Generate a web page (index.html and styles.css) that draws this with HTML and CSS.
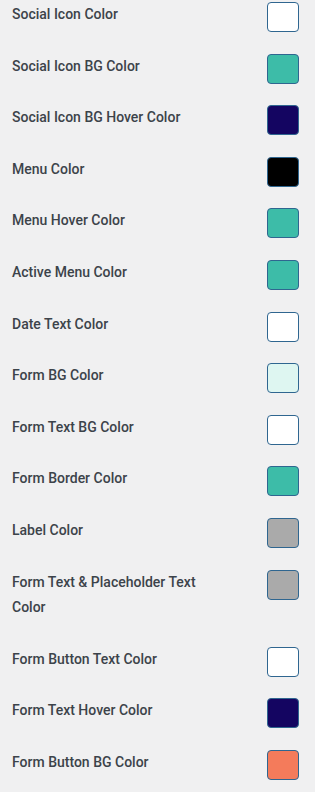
FILE: index.html
```html
<!DOCTYPE html>
<html lang="en">
<head>
    <meta charset="UTF-8">
    <title>Colors</title>
    <link rel="stylesheet" href="styles.css">
</head>
<body>
<ul class="colors">
    <li><span class="label">Social Icon Color</span><span class="swatch white"></span></li>
    <li><span class="label">Social Icon BG Color</span><span class="swatch teal"></span></li>
    <li><span class="label">Social Icon BG Hover Color</span><span class="swatch navy"></span></li>
    <li><span class="label">Menu Color</span><span class="swatch black"></span></li>
    <li><span class="label">Menu Hover Color</span><span class="swatch teal"></span></li>
    <li><span class="label">Active Menu Color</span><span class="swatch teal"></span></li>
    <li><span class="label">Date Text Color</span><span class="swatch white"></span></li>
    <li><span class="label">Form BG Color</span><span class="swatch mint"></span></li>
    <li><span class="label">Form Text BG Color</span><span class="swatch white"></span></li>
    <li><span class="label">Form Border Color</span><span class="swatch teal"></span></li>
    <li><span class="label">Label Color</span><span class="swatch grey"></span></li>
    <li><span class="label">Form Text &amp; Placeholder Text Color</span><span class="swatch grey"></span></li>
    <li><span class="label">Form Button Text Color</span><span class="swatch white"></span></li>
    <li><span class="label">Form Text Hover Color</span><span class="swatch navy"></span></li>
    <li><span class="label">Form Button BG Color</span><span class="swatch orange"></span></li>
</ul>
</body>
</html>
```

FILE: styles.css
```css
html, body{
    margin:0;
    background:#f0f0f1;
}
.colors{
    list-style:none;
    margin:0;
    padding:2px 16px 20px 12px;
    display:flex;
    flex-direction:column;
    gap:26px;
    font-family:Roboto, "Liberation Sans", sans-serif;
    font-size:14px;
    font-weight:500;
    line-height:25.6px;
    color:#3c434a;
}
.colors li{
    display:flex;
    justify-content:space-between;
    align-items:flex-start;
}
.label{
    max-width:200px;
}
/* swatch hangs below the text line, doesn't add to the row */
.swatch{
    width:32px;
    height:30px;
    margin-bottom:-5px;
    box-sizing:border-box;
    border:1px solid #2f6690;
    border-radius:4px;
}
.white{ background:#ffffff; }
.teal{ background:#3dbca8; }
.navy{ background:#140561; }
.black{ background:#000000; }
.mint{ background:#def6f1; }
.grey{ background:#aaaaaa; }
.orange{ background:#f47b5b; }
```
